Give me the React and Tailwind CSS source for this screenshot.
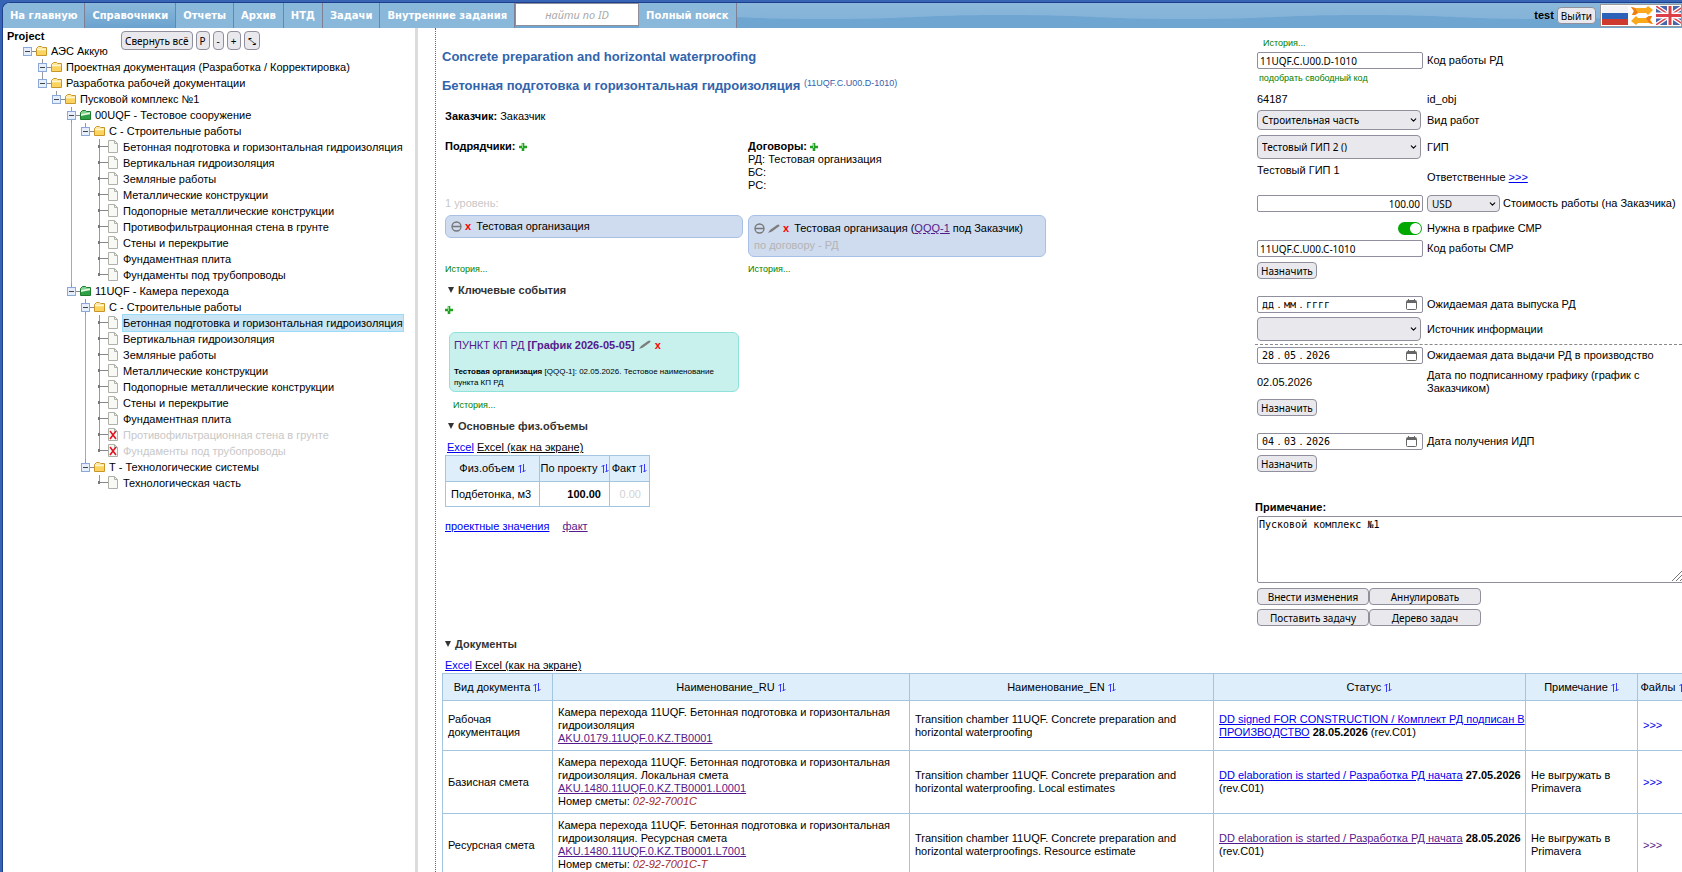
import { ChevronDown } from 'lucide-react'

const NAV = ['На главную', 'Справочники', 'Отчеты', 'Архив', 'НТД', 'Задачи', 'Внутренние задания']

const leaf = (name, extra) => ({ name, ...extra })

const TREE = [
  {
    name: 'АЭС Аккую',
    children: [
      { name: 'Проектная документация (Разработка / Корректировка)', closed: true },
      {
        name: 'Разработка рабочей документации',
        children: [
          {
            name: 'Пусковой комплекс №1',
            children: [
              {
                name: '00UQF - Тестовое сооружение',
                green: true,
                children: [
                  {
                    name: 'С - Строительные работы',
                    children: [
                      leaf('Бетонная подготовка и горизонтальная гидроизоляция'),
                      leaf('Вертикальная гидроизоляция'),
                      leaf('Земляные работы'),
                      leaf('Металлические конструкции'),
                      leaf('Подопорные металлические конструкции'),
                      leaf('Противофильтрационная стена в грунте'),
                      leaf('Стены и перекрытие'),
                      leaf('Фундаментная плита'),
                      leaf('Фундаменты под трубопроводы'),
                    ],
                  },
                ],
              },
              {
                name: '11UQF - Камера перехода',
                green: true,
                children: [
                  {
                    name: 'С - Строительные работы',
                    children: [
                      leaf('Бетонная подготовка и горизонтальная гидроизоляция', { selected: true }),
                      leaf('Вертикальная гидроизоляция'),
                      leaf('Земляные работы'),
                      leaf('Металлические конструкции'),
                      leaf('Подопорные металлические конструкции'),
                      leaf('Стены и перекрытие'),
                      leaf('Фундаментная плита'),
                      leaf('Противофильтрационная стена в грунте', { cancelled: true }),
                      leaf('Фундаменты под трубопроводы', { cancelled: true }),
                    ],
                  },
                  { name: 'Т - Технологические системы', children: [leaf('Технологическая часть')] },
                ],
              },
            ],
          },
        ],
      },
    ],
  },
]

const DOCS = [
  {
    kind: 'Рабочая документация',
    ru: 'Камера перехода 11UQF. Бетонная подготовка и горизонтальная гидроизоляция',
    code: 'AKU.0179.11UQF.0.KZ.TB0001',
    en: 'Transition chamber 11UQF. Concrete preparation and horizontal waterproofing',
    status: 'DD signed FOR CONSTRUCTION / Комплект РД подписан В ПРОИЗВОДСТВО',
    date: '28.05.2026',
  },
  {
    kind: 'Базисная смета',
    ru: 'Камера перехода 11UQF. Бетонная подготовка и горизонтальная гидроизоляция. Локальная смета',
    code: 'AKU.1480.11UQF.0.KZ.TB0001.L0001',
    estimate: '02-92-7001С',
    en: 'Transition chamber 11UQF. Concrete preparation and horizontal waterproofing. Local estimates',
    status: 'DD elaboration is started / Разработка РД начата',
    date: '27.05.2026',
    note: 'Не выгружать в Primavera',
  },
  {
    kind: 'Ресурсная смета',
    ru: 'Камера перехода 11UQF. Бетонная подготовка и горизонтальная гидроизоляция. Ресурсная смета',
    code: 'AKU.1480.11UQF.0.KZ.TB0001.L7001',
    estimate: '02-92-7001С-Т',
    en: 'Transition chamber 11UQF. Concrete preparation and horizontal waterproofings. Resource estimate',
    status: 'DD elaboration is started / Разработка РД начата',
    date: '28.05.2026',
    note: 'Не выгружать в Primavera',
    visited: true,
  },
]

const UI = "font-['Noto_Sans',sans-serif] text-[10px]"
const BTN = `${UI} flex items-center justify-center h-[17px] rounded border border-[#8f8f9d] bg-[#e9e9ed] px-[3px] leading-none`
const INPUT = 'border border-[#8f8f9d] rounded-[2px] bg-white'

// Expander box, connector and folder of a branch row
function BranchIcon({ green, stub, through }) {
  const dark = green ? '#1d7d2c' : '#c9962b'
  return (
    <svg width="28" height="16" className="shrink-0">
      {stub && <path d="M4.5 0V4" stroke="#999" />}
      {through && <path d="M4.5 12V16" stroke="#999" />}
      <path d="M9 8.5H13" stroke="#888" />
      <rect x="0.5" y="4.5" width="8" height="8" fill="#e6eefb" stroke="#8aa9d8" />
      <path d="M2 8.5H7" stroke="#444" />
      <path d="M13.5 5.5L15.5 3.5H18.5L19.5 4.5H23.5V12.5H13.5Z" fill={green ? '#7fd089' : '#ffe9a0'} stroke={dark} />
      <path d="M14 7.5H23V12H14Z" fill={green ? '#2fa045' : '#fbd35f'} />
      {green && <path d="M14 7L23 5.5V7L14 9Z" fill="#e6f7e6" />}
      {!green && <path d="M14 6.5H23" stroke="#fff6d0" />}
    </svg>
  )
}

// Connector and sheet of a leaf row
function LeafIcon({ last, cancelled }) {
  return (
    <svg width="28" height="16" className="shrink-0">
      <path d={last ? 'M4.5 0V8' : 'M4.5 0V16'} stroke="#999" />
      <path d="M4 7.5H13" stroke="#888" />
      <rect x="3" y="6" width="2" height="3" fill="#777" />
      <path d="M13.5 1.5H19.5L22.5 4.5V13.5H13.5Z" fill="#f8f9f5" stroke="#aeb0aa" />
      <path d="M19.5 1.5V4.5H22.5" fill="none" stroke="#aeb0aa" />
      {cancelled && <path d="M15 4L21 12M21 4L15 12" stroke="#e01020" strokeWidth="1.5" />}
    </svg>
  )
}

function TreeNode({ node, depth, last }) {
  const branch = node.children || node.closed
  let text = 'whitespace-nowrap'
  if (node.selected) text += ' -m-px border border-[#99dbf8] bg-[#c9e5f3]'
  if (node.cancelled) text += ' text-[#c8c8c8]'
  return (
    <li>
      <div className="flex h-4 items-center leading-4">
        {branch
          ? <BranchIcon green={node.green} stub={depth > 0} through={!last} />
          : <LeafIcon last={last} cancelled={node.cancelled} />}
        <span className={text}>{node.name}</span>
      </div>
      {node.children && (
        <ul className={`ml-1 border-l ${last ? 'border-transparent' : 'border-[#aaa]'} ${depth === 0 || depth === 2 ? 'pl-[10px]' : 'pl-[9px]'}`}>
          {node.children.map((child, i) => (
            <TreeNode key={i} node={child} depth={depth + 1} last={i === node.children.length - 1} />
          ))}
        </ul>
      )}
    </li>
  )
}

const Plus = () => (
  <button aria-label="Добавить" className="inline-block align-middle">
    <svg width="8" height="8"><path d="M4 0V8M0 4H8" stroke="#22a022" strokeWidth="2.6" /><path d="M3.5 0.5V5" stroke="#8fdc8f" /></svg>
  </button>
)

const Minus = () => (
  <svg width="11" height="11" className="inline-block shrink-0"><circle cx="5.5" cy="5.5" r="4.5" fill="none" stroke="#777" strokeWidth="1.3" /><path d="M1 5.5H10" stroke="#777" strokeWidth="1.3" /></svg>
)

const Pencil = () => (
  <svg width="12" height="10" className="inline-block shrink-0"><path d="M0 9L2 6L9 1L11 0.5L11.5 2L4 7.5Z" fill="#7c7c7c" /></svg>
)

const Cross = () => <b className="text-[11px] text-[#f00]">x</b>

const Sort = () => (
  <svg width="8" height="9" className="inline-block align-[-1px]" fill="none" stroke="#3a3aff">
    <path d="M2.5 9V1M0.5 3L2.5 1L3.5 2" /><path d="M5.5 0V8M4.5 7L5.5 8L7.5 6" />
  </svg>
)

const History = ({ className = '' }) => (
  <a href="#" className={`text-[9px] leading-[14px] text-[#008000] ${className}`}>История...</a>
)

const Link = ({ visited, children }) => (
  <a href="#" className={`underline ${visited ? 'text-[#551a8b]' : 'text-[#0000ee]'}`}>{children}</a>
)

function Excel() {
  return (
    <div className="leading-[14px]">
      <Link>Excel</Link> <a href="#" className="text-black underline">Excel (как на экране)</a>
    </div>
  )
}

function SectionTitle({ children }) {
  return (
    <h3 className="flex items-center gap-1 font-bold leading-[14px] text-[#333]">
      <svg width="6" height="6"><path d="M0 0H6L3 6Z" fill="#333" /></svg>
      {children}
    </h3>
  )
}

function Select({ label, value, className }) {
  return (
    <div className={`relative shrink-0 ${className}`}>
      <select aria-label={label} className={`${UI} block h-full w-full appearance-none rounded border border-[#8f8f9d] bg-[#e9e9ed] pl-1 leading-none`}>
        <option>{value}</option>
      </select>
      <ChevronDown size={9} strokeWidth={3} className="pointer-events-none absolute top-1/2 right-[3px] -translate-y-1/2" />
    </div>
  )
}

function DateField({ label, parts }) {
  const part = "bg-transparent p-0 font-['DejaVu_Sans_Mono',monospace] text-[10px] text-black placeholder:text-black"
  const prop = parts ? 'defaultValue' : 'placeholder'
  const [d, m, y] = parts || ['дд', 'мм', 'гггг']
  return (
    <div role="group" aria-label={label} className={`${INPUT} flex h-[17px] w-[166px] items-center pr-[5px] pl-1`}>
      <input aria-label="день" {...{ [prop]: d }} className={`${part} w-3`} />
      <span className="w-[10px] text-center">.</span>
      <input aria-label="месяц" {...{ [prop]: m }} className={`${part} w-3`} />
      <span className="w-[10px] text-center">.</span>
      <input aria-label="год" {...{ [prop]: y }} className={`${part} w-6`} />
      <button aria-label="Календарь" className="ml-auto">
        <svg width="11" height="11" fill="none" stroke="#666"><rect x="0.5" y="1.5" width="10" height="9" rx="1" /><path d="M1 3H10" strokeWidth="2" /><path d="M2.5 0V2M8.5 0V2" /></svg>
      </button>
    </div>
  )
}

// One line of the form: control on the left, its caption on the right
function Row({ className = '', label, children }) {
  return (
    <div className={`flex items-center pl-0.5 leading-[13px] ${className}`}>
      <div className="w-[170px] shrink-0">{children}</div>
      <div className="max-w-[230px]">{label}</div>
    </div>
  )
}

function Flags() {
  return (
    <div className="flex h-[23px] w-[82px] items-center gap-px overflow-hidden border border-[#999] bg-white pl-px">
      <svg width="26" height="19" className="shrink-0">
        <rect width="26" height="19" fill="#f4f4f6" /><rect y="7" width="26" height="6" fill="#2c63b8" /><rect y="13" width="26" height="6" fill="#cf3a2e" />
      </svg>
      <svg width="26" height="19" className="shrink-0" fill="#fba91c">
        <path d="M2 1L6 2H17L19 0L24 4L19 9L17 7H9L6 9H3L5 5Z" /><path d="M24 18L20 17H9L7 19L2 15L7 10L9 12H17L20 10H23L21 14Z" />
        <path d="M2 1L6 2L9 7L6 9H3L5 5ZM24 18L20 17L17 12L20 10H23L21 14Z" fill="#f07d14" />
      </svg>
      <svg width="28" height="19" className="shrink-0">
        <rect width="28" height="19" fill="#4a66ab" /><path d="M0 0L28 19M28 0L0 19" stroke="#fff" strokeWidth="4" /><path d="M0 0L28 19M28 0L0 19" stroke="#d8434b" strokeWidth="1.5" />
        <path d="M14 0V19M0 9.5H28" stroke="#fff" strokeWidth="6" /><path d="M14 0V19M0 9.5H28" stroke="#dc3f48" strokeWidth="3" />
      </svg>
    </div>
  )
}

function Header() {
  const item = 'flex h-full items-center border-r border-[#7f7f93] bg-[#8ab8db] px-[7px]'
  return (
    <header className="relative flex h-[25px] shrink-0 items-center overflow-hidden bg-gradient-to-b from-[#8bb8da] to-[#80b0d8]">
      <svg className="absolute inset-0 h-full w-full">
        <pattern id="wave" x="102" width="360" height="25" patternUnits="userSpaceOnUse">
          <path d="M0 16C90 16 90 12 180 12S270 16 360 16V25H0Z" fill="#6fa6d1" />
        </pattern>
        <rect width="100%" height="100%" fill="url(#wave)" />
      </svg>
      <nav className="relative flex h-full font-['DejaVu_Sans',sans-serif] text-[10px] font-bold text-white">
        {NAV.map((n) => (
          <a key={n} href="#" className={n === 'Справочники' ? `${item} bg-gradient-to-b from-[#8ab8db] to-[#6ba3cf]` : item}>{n}</a>
        ))}
        <input aria-label="найти по ID" placeholder="найти по ID"
          className="h-[23px] w-[124px] border border-[#8f8f9d] bg-white text-center font-['Noto_Sans',sans-serif] text-[11px] font-normal italic placeholder:text-[#aaa]" />
        <a href="#" className={item}>Полный поиск</a>
      </nav>
      <div className="relative ml-auto flex items-center gap-[3px]">
        <b>test</b>
        <button className={`${BTN} mr-px`}>Выйти</button>
        <Flags />
      </div>
    </header>
  )
}

function Sidebar() {
  return (
    <aside className="relative w-[415px] shrink-0 border-r-[3px] border-[#dcdcdc] pt-[1px]">
      <b className="block pl-1 leading-[14px]">Project</b>
      <div className="absolute top-[3px] left-[118px] flex gap-[3px]">
        {['Свернуть всё', 'P', '-', '+', '⤡'].map((t) => (
          <button key={t} className={`${BTN} h-[19px]`}>{t}</button>
        ))}
      </div>
      <ul className="pl-5">
        {TREE.map((n) => <TreeNode key={n.name} node={n} depth={0} last />)}
      </ul>
    </aside>
  )
}

function Details() {
  const box = 'w-[298px] rounded-md border border-[#a9c0e4] bg-[#cfdbee] px-[5px]'
  return (
    <section className="min-w-0 flex-1 pt-[21px] pl-[9px]">
      <div className="-ml-[3px] text-[13px] font-bold text-[#3264ac]">
        <h1 className="leading-4">Concrete preparation and horizontal waterproofing</h1>
        <h2 className="mt-[13px] leading-4">
          Бетонная подготовка и горизонтальная гидроизоляция <sup className="text-[9px] font-normal">(11UQF.C.U00.D-1010)</sup>
        </h2>
      </div>
      <p className="mt-4 leading-[13px]"><b>Заказчик:</b> Заказчик</p>

      <div className="mt-[17px] grid grid-cols-[298px_298px] gap-x-[5px] leading-[13px]">
        <div className="h-[70px]">
          <b>Подрядчики:</b> <Plus />
          <div className="mt-11 text-[#c8c8c8]">1 уровень:</div>
        </div>
        <div className="whitespace-pre-line"><b>Договоры:</b> <Plus />{'\nРД: Тестовая организация\nБС:\nРС:'}</div>
        <div className={`${box} mt-[5px] flex h-[23px] items-center gap-[3px]`}>
          <Minus /> <Cross /> <span className="ml-0.5">Тестовая организация</span>
        </div>
        <div className={`${box} mt-[5px] h-[42px] pt-1`}>
          <div className="flex h-[17px] items-center gap-[3px]">
            <Minus /> <Pencil /> <Cross />
            <span className="ml-0.5">Тестовая организация (<Link visited>QQQ-1</Link> под Заказчик)</span>
          </div>
          <div className="mt-0.5 text-[#b4b4b4]">по договору - РД</div>
        </div>
        <History className="mt-[5px]" />
        <History className="mt-[5px]" />
      </div>

      <div className="mt-[7px] pl-[3px]"><SectionTitle>Ключевые события</SectionTitle></div>
      <div className="mt-[5px] leading-[14px]"><Plus /></div>
      <div className="mt-4 ml-1 h-[60px] w-[290px] rounded-md border border-[#8fe3da] bg-[#c8f1ee] px-1 pt-1">
        <div className="flex h-4 items-center gap-1 text-[#551a8b]">
          <a href="#">ПУНКТ КП РД <b>[График 2026-05-05]</b></a> <Pencil /> <Cross />
        </div>
        <p className="mt-[13px] text-[8px] leading-[11px]"><b>Тестовая организация</b> [QQQ-1]: 02.05.2026. Тестовое наименование<br />пункта КП РД</p>
      </div>
      <div className="mt-[5px] pl-2 leading-[14px]"><History /></div>

      <div className="mt-[7px] pl-[3px]"><SectionTitle>Основные физ.объемы</SectionTitle></div>
      <div className="mt-[7px] pl-0.5"><Excel /></div>
      <table className="mt-px border-collapse">
        <thead>
          <tr className="h-[26px] bg-[#dfeefb]">
            <th className="w-[94px] border border-[#a3c5de] font-normal">Физ.объем <Sort /></th>
            <th className="w-[70px] border border-[#a3c5de] font-normal whitespace-nowrap">По проекту <Sort /></th>
            <th className="w-[40px] border border-[#a3c5de] font-normal whitespace-nowrap">Факт <Sort /></th>
          </tr>
        </thead>
        <tbody>
          <tr className="h-[25px]">
            <td className="border border-[#a3c5de] pl-[5px]">Подбетонка, м3</td>
            <td className="border border-[#a3c5de] pr-2 text-right font-bold">100.00</td>
            <td className="border border-[#a3c5de] pr-2 text-right text-[#d2d2d2]">0.00</td>
          </tr>
        </tbody>
      </table>
      <div className="mt-3 flex gap-[13px] leading-[14px]">
        <Link>проектные значения</Link>
        <Link visited>факт</Link>
      </div>
    </section>
  )
}

function WorkForm() {
  const field = `${INPUT} ${UI} block h-[17px] w-[166px] px-[2px]`
  const wide = `${BTN} w-[112px]`
  return (
    <form className="w-[427px] shrink-0 pt-2" onSubmit={(e) => e.preventDefault()}>
      <div className="flex h-4 pl-2"><History /></div>
      <Row label={<label htmlFor="rd">Код работы РД</label>}><input id="rd" defaultValue="11UQF.C.U00.D-1010" className={field} /></Row>
      <a href="#" className="mt-px block pl-1 text-[9px] leading-4 text-[#008000]">подобрать свободный код</a>
      <Row className="mt-[7px]" label="id_obj">64187</Row>
      <Row className="mt-1" label="Вид работ"><Select label="Вид работ" value="Строительная часть" className="h-5 w-[164px]" /></Row>
      <Row className="mt-[5px]" label="ГИП"><Select label="ГИП" value="Тестовый ГИП 2 ()" className="h-6 w-[164px]" /></Row>
      <Row className="mt-[5px] !items-start" label={<div className="pt-[7px]">Ответственные <Link>{'>>>'}</Link></div>}>Тестовый ГИП 1</Row>
      <Row className="mt-[11px]" label={<div className="flex items-center gap-[3px] whitespace-nowrap"><Select label="Валюта" value="USD" className="h-[17px] w-[73px]" /><label htmlFor="cost">Стоимость работы (на Заказчика)</label></div>}>
        <input id="cost" defaultValue="100.00" className={`${field} text-right`} />
      </Row>
      <Row className="mt-[10px]" label={<label htmlFor="smr">Нужна в графике СМР</label>}>
        <input id="smr" type="checkbox" defaultChecked
          className="ml-[141px] block h-[13px] w-6 appearance-none rounded-full bg-[#00a800] before:mt-px before:mr-px before:ml-auto before:block before:size-[11px] before:rounded-full before:bg-white" />
      </Row>
      <Row className="mt-[5px]" label={<label htmlFor="smrcode">Код работы СМР</label>}><input id="smrcode" defaultValue="11UQF.C.U00.C-1010" className={field} /></Row>
      <Row className="mt-[5px]"><button className={BTN}>Назначить</button></Row>

      <Row className="mt-[17px]" label="Ожидаемая дата выпуска РД"><DateField label="Ожидаемая дата выпуска РД" /></Row>
      <Row className="mt-1 border-b border-dashed border-[#888] pb-[3px]" label="Источник информации"><Select label="Источник информации" value="" className="h-6 w-[164px]" /></Row>
      <Row className="mt-0.5" label="Ожидаемая дата выдачи РД в производство"><DateField label="Ожидаемая дата выдачи РД в производство" parts={['28', '05', '2026']} /></Row>
      <Row className="mt-[5px]" label="Дата по подписанному графику (график с Заказчиком)">02.05.2026</Row>
      <Row className="mt-1"><button className={BTN}>Назначить</button></Row>
      <Row className="mt-[17px]" label="Дата получения ИДП"><DateField label="Дата получения ИДП" parts={['04', '03', '2026']} /></Row>
      <Row className="mt-[5px]"><button className={BTN}>Назначить</button></Row>

      <label htmlFor="note" className="mt-7 block leading-[14px] font-bold">Примечание:</label>
      <div className="relative mt-[2px] -mr-1 ml-0.5">
        <textarea id="note" defaultValue="Пусковой комплекс №1"
          className={`${INPUT} block h-[67px] w-full resize-none p-px font-['DejaVu_Sans_Mono',monospace] text-[10px] leading-[13px]`} />
        <svg width="12" height="12" className="absolute right-[2px] bottom-0.5" stroke="#777"><path d="M0 12L12 0M4 12L12 4M8 12L12 8" /></svg>
      </div>
      <div className="mt-[5px] ml-0.5 grid grid-cols-[112px_112px] gap-y-1">
        {['Внести изменения', 'Аннулировать', 'Поставить задачу', 'Дерево задач'].map((t) => <button key={t} className={wide}>{t}</button>)}
      </div>
    </form>
  )
}

function Documents() {
  const cell = 'border border-[#a3c5de] pl-[5px]'
  const heads = ['Вид документа', 'Наименование_RU', 'Наименование_EN', 'Статус', 'Примечание', 'Файлы']
  return (
    <section className="pt-[11px] pl-[6px]">
      <div className="pl-[3px]"><SectionTitle>Документы</SectionTitle></div>
      <div className="mt-[7px] pl-[3px]"><Excel /></div>
      <table className="mt-px w-[calc(100%+8px)] table-fixed border-collapse leading-[13px]">
        <colgroup>
          <col className="w-[110px]" /><col className="w-[357px]" /><col className="w-[304px]" /><col /><col className="w-[112px]" /><col className="w-[52px]" />
        </colgroup>
        <thead>
          <tr className="h-[27px] bg-[#dfeefb]">
            {heads.map((h) => <th key={h} className="border border-[#a3c5de] font-normal whitespace-nowrap">{h} <Sort /></th>)}
          </tr>
        </thead>
        <tbody>
          {DOCS.map((d) => (
            <tr key={d.code}>
              <td className={`${cell} pr-4`}>{d.kind}</td>
              <td className={`${cell} py-[5px] pr-[15px]`}>
                {d.ru}<br />
                <Link visited>{d.code}</Link>
                {d.estimate && <><br />Номер сметы: <i className="text-[#a52a2a]">{d.estimate}</i></>}
              </td>
              <td className={`${cell} pr-[15px]`}>{d.en}</td>
              <td className={cell}><Link visited={d.visited}>{d.status}</Link> <b>{d.date}</b> (rev.C01)</td>
              <td className={cell}>{d.note}</td>
              <td className={cell}><a href="#" className={d.visited ? 'text-[#551a8b]' : 'text-[#0000ee]'}>{'>>>'}</a></td>
            </tr>
          ))}
        </tbody>
      </table>
    </section>
  )
}

export default function App() {
  return (
    <div className="h-screen overflow-hidden bg-[#3864b6] pt-[2px] pl-[2px] font-['Liberation_Sans',Arial,sans-serif] text-[11px] text-black">
      <div className="flex h-full flex-col overflow-hidden rounded-tl-lg border-t border-l border-[#1d3f8c] bg-white">
        <Header />
        <div className="flex min-h-0 flex-1">
          <Sidebar />
          <main className="ml-[17px] min-w-0 flex-1 overflow-hidden border-l border-dotted border-[#666]">
            <div className="flex">
              <Details />
              <WorkForm />
            </div>
            <Documents />
          </main>
        </div>
      </div>
    </div>
  )
}
